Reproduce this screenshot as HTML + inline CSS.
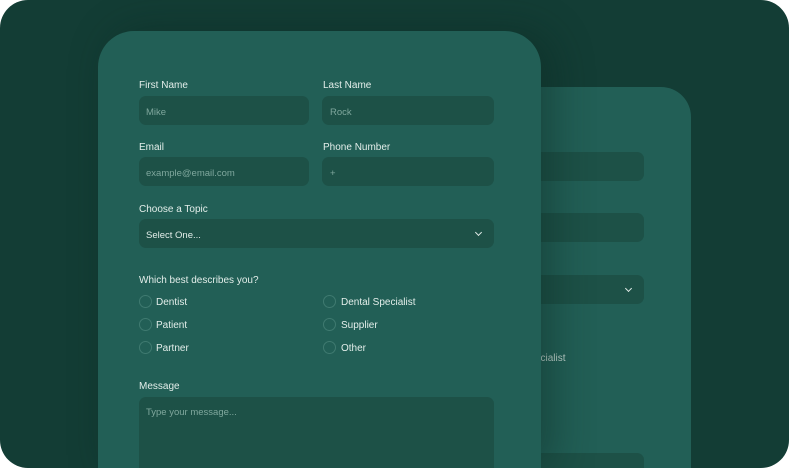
<html><head><style>
body{margin:0;width:790px;height:469px;background:#fff;overflow:hidden;font-family:"Liberation Sans",sans-serif;}
.outer{position:absolute;left:0;top:0;width:789px;height:468px;background:#133d35;border-radius:28px;overflow:hidden;}
.card{position:absolute;background:#225f56;border-radius:36px 36px 0 0;width:443px;}
.front{left:98px;top:31px;height:437px;box-shadow:12px 0 40px rgba(10,40,34,.45);}
.back{left:248px;top:87px;height:381px;border-radius:30px 30px 0 0;}
.lbl{position:absolute;color:#e3eeea;font-size:10px;}
.f{position:absolute;background:#1d5147;border-radius:7px;height:29px;}
.ph{position:absolute;color:#7fa79d;font-size:9.5px;}
.r{position:absolute;width:11px;height:11px;border:1px solid #3f7a70;border-radius:50%;}
.chev{position:absolute;width:4px;height:4px;border-right:1.3px solid #dfeae6;border-bottom:1.3px solid #dfeae6;transform:rotate(45deg);}
</style></head><body><div class="outer">
<div class="card back">
<div class="f" style="left:41px;top:65px;width:355px"></div>
<div class="f" style="left:41px;top:126px;width:355px"></div>
<div class="f" style="left:41px;top:188px;width:355px"></div>
<div class="chev" style="left:378px;top:199px"></div>
<div class="lbl" style="left:243px;top:266px;color:#c8d8d3">Dental Specialist</div>
<div class="f" style="left:41px;top:366px;width:355px;height:60px"></div>
</div>
<div class="card front">
<div class="lbl" style="left:41px;top:49px">First Name</div>
<div class="lbl" style="left:225px;top:49px">Last Name</div>
<div class="f" style="left:41px;top:65px;width:170px"></div><div class="ph" style="left:48px;top:76px">Mike</div>
<div class="f" style="left:224px;top:65px;width:172px"></div><div class="ph" style="left:232px;top:76px">Rock</div>
<div class="lbl" style="left:41px;top:111px">Email</div>
<div class="lbl" style="left:225px;top:111px">Phone Number</div>
<div class="f" style="left:41px;top:126px;width:170px"></div><div class="ph" style="left:48px;top:137px">example@email.com</div>
<div class="f" style="left:224px;top:126px;width:172px"></div><div class="ph" style="left:232px;top:137px">+</div>
<div class="lbl" style="left:41px;top:173px">Choose a Topic</div>
<div class="f" style="left:41px;top:188px;width:355px"></div><div class="ph" style="left:48px;top:199px;color:#e3eeea">Select One...</div>
<div class="chev" style="left:378px;top:199px"></div>
<div class="lbl" style="left:41px;top:244px">Which best describes you?</div>
<div class="r" style="left:41px;top:264px"></div><div class="lbl" style="left:58px;top:266px">Dentist</div>
<div class="r" style="left:41px;top:287px"></div><div class="lbl" style="left:58px;top:289px">Patient</div>
<div class="r" style="left:41px;top:310px"></div><div class="lbl" style="left:58px;top:312px">Partner</div>
<div class="r" style="left:225px;top:264px"></div><div class="lbl" style="left:243px;top:266px">Dental Specialist</div>
<div class="r" style="left:225px;top:287px"></div><div class="lbl" style="left:243px;top:289px">Supplier</div>
<div class="r" style="left:225px;top:310px"></div><div class="lbl" style="left:243px;top:312px">Other</div>
<div class="lbl" style="left:41px;top:350px">Message</div>
<div class="f" style="left:41px;top:366px;width:355px;height:80px"></div><div class="ph" style="left:48px;top:376px">Type your message...</div>
</div>
</div></body></html>
